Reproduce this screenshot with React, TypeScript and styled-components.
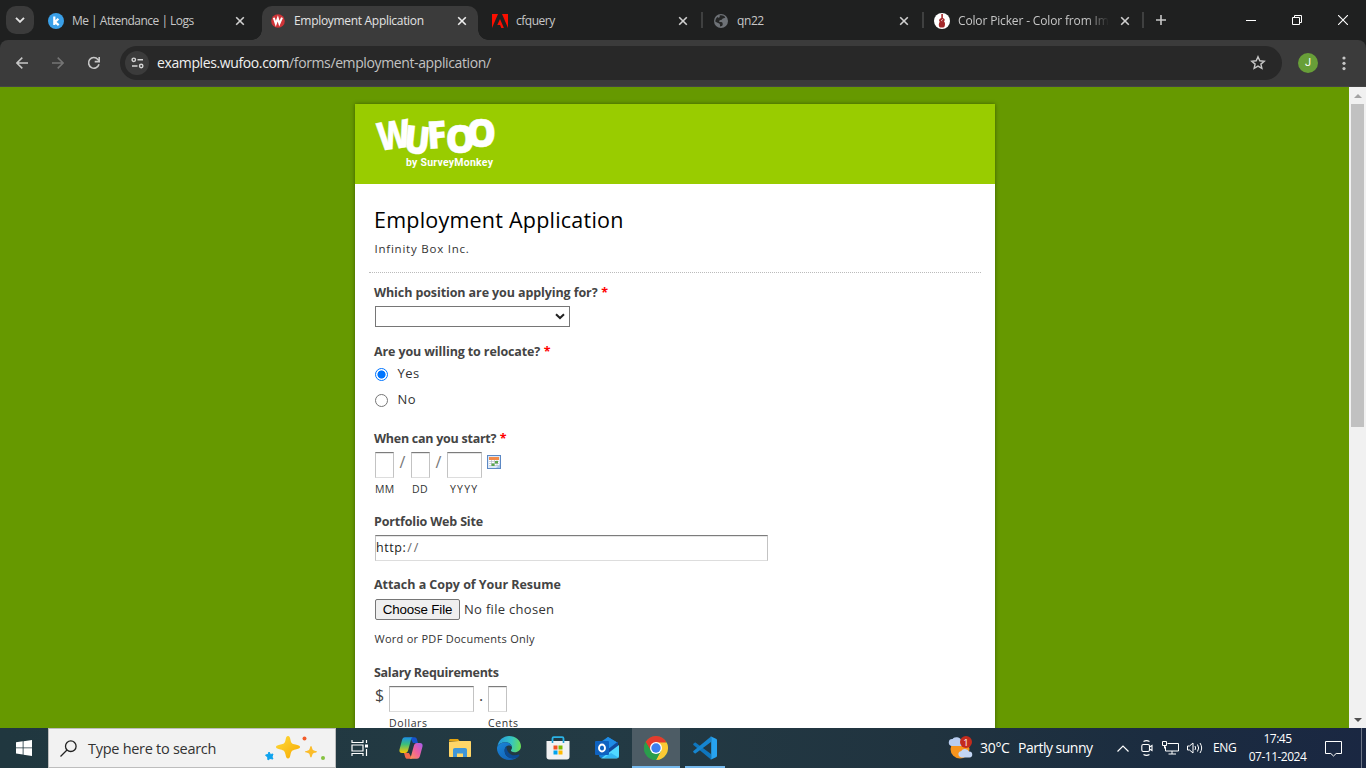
import React from "react";
import styled, { createGlobalStyle, css } from "styled-components";

const GlobalStyle = createGlobalStyle`
  * { box-sizing: border-box; }
  html, body { margin: 0; padding: 0; overflow: hidden; }
  body { background: #669900; font-family: "Open Sans", "Noto Sans", sans-serif; }
`;

const Desktop = styled.div`
  width: 1366px;
  height: 768px;
  display: flex;
  flex-direction: column;
  overflow: hidden;
`;

/* ---------- browser chrome ---------- */
const TabStrip = styled.div`
  height: 40px;
  background: #1f2020;
  display: flex;
  align-items: stretch;
  flex: none;
`;
const TabSearch = styled.div`
  width: 28px;
  height: 28px;
  margin: 6px 0 0 6px;
  border-radius: 10px;
  background: #3b3b3b;
  display: flex;
  align-items: center;
  justify-content: center;
`;
const Tab = styled.div<{ $w: number; $active?: boolean; $gap?: number; $end?: number }>`
  position: relative;
  width: ${(p) => p.$w}px;
  margin-left: ${(p) => p.$gap ?? 0}px;
  height: 34px;
  margin-top: 6px;
  padding: 0 ${(p) => p.$end ?? 10}px 5px ${(p) => (p.$active ? 8 : 10)}px;
  display: flex;
  align-items: center;
  ${(p) =>
    p.$active &&
    css`
      background: #3b3b3b;
      border-radius: 10px 10px 0 0;
      &::before, &::after {
        content: "";
        position: absolute;
        bottom: 0;
        width: 10px;
        height: 10px;
      }
      &::before { left: -10px; background: radial-gradient(circle at 0 0, transparent 9.5px, #3b3b3b 10px); }
      &::after { right: -10px; background: radial-gradient(circle at 100% 0, transparent 9.5px, #3b3b3b 10px); }
    `}
`;
const TabTitle = styled.span<{ $ls?: number; $active?: boolean; $fade?: boolean }>`
  flex: 1;
  min-width: 0;
  margin-left: 8px;
  font-size: 12px;
  line-height: 16px;
  white-space: nowrap;
  overflow: hidden;
  letter-spacing: ${(p) => p.$ls ?? 0}px;
  color: ${(p) => (p.$active ? "#e3e3e3" : "#c7c7c7")};
  ${(p) => p.$fade && css`mask-image: linear-gradient(90deg, #000 128px, transparent 151px);`}
`;
const Divider = styled.i`
  width: 2px;
  height: 16px;
  margin-top: 12px;
  background: #3f4040;
`;
const WindowButtons = styled.div`
  margin-left: auto;
  display: flex;
`;
const WinButton = styled.div`
  width: 46px;
  height: 40px;
  display: flex;
  align-items: center;
  justify-content: center;
`;
const ToolbarBack = styled.div`
  background: #1f2020;
  flex: none;
`;
const Toolbar = styled.div`
  height: 47px;
  background: #3b3b3b;
  border-radius: 8px 8px 0 0;
  border-bottom: 1px solid #454545;
  display: flex;
  align-items: center;
  padding-left: 4px;
`;
const ToolButton = styled.div`
  width: 36px;
  display: flex;
  justify-content: center;
`;
const Omnibox = styled.div`
  width: 1162px;
  height: 34px;
  margin-left: 8px;
  border-radius: 17px;
  background: #282828;
  display: flex;
  align-items: center;
  padding: 0 16px 0 5px;
`;
const SiteInfo = styled.div`
  width: 24px;
  height: 24px;
  border-radius: 50%;
  background: #3b3b3b;
  display: flex;
  align-items: center;
  justify-content: center;
`;
const Url = styled.span`
  flex: 1;
  margin-left: 8px;
  font-size: 14px;
  line-height: 20px;
  letter-spacing: -0.385px;
  color: #c3c3c3;
  b { font-weight: 400; color: #f0f0f0; }
`;
const Avatar = styled.div`
  width: 20px;
  height: 20px;
  margin-left: 16px;
  border-radius: 50%;
  background: #689f38;
  color: #fff;
  font: 11px/20px Roboto, sans-serif;
  text-align: center;
`;

/* ---------- page ---------- */
const Viewport = styled.div`
  height: 641px;
  display: flex;
  flex: none;
  overflow: hidden;
`;
const PageArea = styled.main`
  width: 1349px;
  background: #669900;
  padding-top: 17px;
  overflow: hidden;
`;
const Card = styled.div`
  width: 640px;
  height: 700px;
  margin-left: 355px;
  background: #fff;
  box-shadow: 0 0 4px rgba(0, 0, 0, 0.4);
  color: #333;
`;
const Header = styled.header`
  height: 80px;
  background: #99cc00;
  padding: 13px 0 0 18px;
`;
const FormHead = styled.div`
  margin: 0 14px 10px;
  padding: 20px 0 0 5px;
  height: 89px;
  border-bottom: 1px dotted #bbb;
`;
const Title = styled.h1`
  margin: 0;
  font-size: 21.5px;
  font-weight: 400;
  line-height: 31px;
  letter-spacing: 0.22px;
  color: #000;
`;
const Sub = styled.div`
  margin: 5px 0 0 0.5px;
  font-size: 11.5px;
  line-height: 18px;
  letter-spacing: 0.77px;
`;
const Field = styled.div<{ $h: number }>`
  height: ${(p) => p.$h}px;
  padding-left: 20px;
`;
const Label = styled.div<{ $ls?: number }>`
  height: 20px;
  margin-left: -1px;
  line-height: 20px;
  font-size: 12.5px;
  font-weight: 700;
  color: #444;
  letter-spacing: ${(p) => p.$ls ?? -0.1}px;
  white-space: nowrap;
  em { color: #f00; font-style: normal; margin-left: 0.5px; }
`;
const Select = styled.div`
  width: 195px;
  height: 21px;
  margin-top: 3px;
  border: 1px solid #767676;
  background: #fff;
  display: flex;
  justify-content: flex-end;
  align-items: center;
  padding-right: 4px;
`;
const Options = styled.div`
  margin-top: -1px;
`;
const Option = styled.div`
  display: flex;
  align-items: center;
  height: 26px;
  font-size: 13px;
  letter-spacing: 0.45px;
  span { margin-left: 9.5px; padding-bottom: 2px; }
`;
const Radio = styled.i<{ $on?: boolean }>`
  width: 13px;
  height: 13px;
  margin-top: 1px;
  border-radius: 50%;
  border: 1px solid ${(p) => (p.$on ? "#0075ff" : "#767676")};
  background: ${(p) => (p.$on ? "radial-gradient(circle, #0075ff 3.7px, #fff 4.4px)" : "#fff")};
`;
const Row = styled.div`
  display: flex;
  margin-top: 3px;
  align-items: flex-start;
`;
const Box = styled.div<{ $w: number }>`
  width: ${(p) => p.$w}px;
  height: 26px;
  border: 1px solid #ccc;
  border-color: #7c7c7c #c3c3c3 #ddd;
  box-shadow: inset 0 1px 0 #e6e6e6;
  background: #fff;
  font-size: 12.5px;
  line-height: 24px;
  letter-spacing: 0.55px;
  color: #222;
  i { font-style: normal; color: #666; letter-spacing: 2px; margin-left: 1px; }
`;
const Sep = styled.span<{ $w: number; $light?: boolean; $align?: string }>`
  width: ${(p) => p.$w}px;
  text-align: ${(p) => p.$align ?? "center"};
  font-size: 16px;
  line-height: ${(p) => (p.$light ? 20 : 18)}px;
  color: ${(p) => (p.$light ? "#777" : "#444")};
`;
const CalendarSlot = styled.div`
  margin: 3px 0 0 5px;
  height: 15px;
  svg { display: block; }
`;
const Captions = styled.div`
  display: flex;
  height: 22px;
  font-size: 10.5px;
  line-height: 22px;
`;
const Caption = styled.span<{ $w: number; $ls?: number; $indent?: number }>`
  width: ${(p) => p.$w}px;
  padding-left: ${(p) => p.$indent ?? 0}px;
  letter-spacing: ${(p) => p.$ls ?? 0.3}px;
`;
const FileRow = styled.div`
  display: flex;
  align-items: center;
  height: 21px;
  margin-top: 4px;
  font-size: 13px;
  line-height: 19px;
  letter-spacing: 0.3px;
  span { padding-bottom: 1px; }
`;
const FileButton = styled.div`
  width: 85px;
  height: 21px;
  margin-right: 4px;
  border: 1px solid #767676;
  border-radius: 2px;
  background: #efefef;
  color: #000;
  text-align: center;
  font: 13.33px/19px "Liberation Sans", Arial, sans-serif;
  letter-spacing: -0.15px;
`;
const Hint = styled.div`
  margin: 9px 0 0 -0.5px;
  font-size: 11px;
  line-height: 20px;
  letter-spacing: 0.27px;
`;

const Scrollbar = styled.div`
  width: 17px;
  background: #f1f1f1;
  display: flex;
  flex-direction: column;
  align-items: center;
  justify-content: space-between;
`;
const Arrow = styled.div`
  height: 17px;
  display: flex;
  align-items: center;
`;
const Thumb = styled.div`
  width: 13px;
  height: 323px;
  margin-bottom: auto;
  background: #c1c1c1;
`;

/* ---------- taskbar ---------- */
const Taskbar = styled.footer`
  height: 40px;
  flex: none;
  display: flex;
  align-items: stretch;
  background: linear-gradient(90deg, #20373f 0, #233a44 45%, #20333f 68%, #1b2c40 85%, #1a2742 100%);
  color: #fff;
`;
const Slot = styled.div<{ $w: number; $bg?: string; $ml?: number }>`
  width: ${(p) => p.$w}px;
  margin-left: ${(p) => p.$ml ?? 0}px;
  background: ${(p) => p.$bg ?? "none"};
  display: flex;
  align-items: center;
  justify-content: center;
  flex: none;
`;
const AppSlot = styled(Slot)<{ $line?: number }>`
  ${(p) =>
    p.$line &&
    css`
      background-image: linear-gradient(#76b9ed, #76b9ed);
      background-size: ${p.$line}px 2px;
      background-position: 50% 100%;
      background-repeat: no-repeat;
    `}
`;
const SearchBox = styled.div`
  width: 288px;
  border: 1px solid #bdbdbd;
  background: #f2f2f2;
  color: #333;
  display: flex;
  align-items: center;
  padding-left: 11px;
  span { margin-left: 11px; font-size: 14.5px; letter-spacing: -0.28px; width: 176px; white-space: nowrap; }
`;
const TrayText = styled.span<{ $w: number; $size?: number; $ls?: number; $ml?: number }>`
  width: ${(p) => p.$w}px;
  margin-left: ${(p) => p.$ml ?? 0}px;
  font-size: ${(p) => p.$size ?? 14}px;
  letter-spacing: ${(p) => p.$ls ?? -0.3}px;
  line-height: 40px;
  white-space: nowrap;
`;
const Tray = styled.div`
  margin-left: auto;
  width: 418px;
  display: flex;
  align-items: stretch;
`;
const Clock = styled.div`
  width: 80px;
  text-align: center;
  font-size: 12px;
  line-height: 18px;
  padding: 2px 0 0 1px;
  letter-spacing: -0.5px;
`;
const Peek = styled.i`
  margin-left: auto;
  width: 5px;
  border-left: 1px solid #6d7687;
`;

/* ---------- icons ---------- */
const CloseX = ({ c = "#d0d0d0" }: { c?: string }) => (
  <svg width="10" height="10" viewBox="0 0 10 10" stroke={c} strokeWidth="1.6">
    <path d="M1.2 1.2l7.6 7.6M8.8 1.2L1.2 8.8" />
  </svg>
);
const KIcon = () => (
  <svg width="16" height="16" viewBox="0 0 16 16">
    <circle cx="8" cy="8" r="8" fill="#3aa0e8" />
    <path d="M6.3 3.5v8.6M10.4 5.8L7 9l3.7 3.2" stroke="#fff" strokeWidth="2.2" fill="none" />
  </svg>
);
const WIcon = () => (
  <svg width="16" height="16" viewBox="0 0 16 16">
    <circle cx="8" cy="8" r="6.8" fill="#cf3438" />
    <path d="M3.8 4.8l2 6 2-5.4 1.6 5.2 2.6-6" stroke="#fff" strokeWidth="2" fill="none" />
  </svg>
);
const AdobeIcon = () => (
  <svg width="16" height="16" viewBox="0 0 16 16" fill="#fa0f00">
    <path d="M0 1h6L0 15zM10 1h6v14zM8 6l3.9 9H9.3l-1.2-3H5.3z" />
  </svg>
);
const GlobeIcon = () => (
  <svg width="16" height="16" viewBox="0 0 16 16">
    <circle cx="8" cy="8" r="7" fill="#6e7277" />
    <path d="M6.7 2.4c2.5-.6 4.6.4 5.6 2-.8 1.2-2.6.4-3 1.6-.5 1.4-2.3.5-3 1.8-.5 1 .3 1.4 1.4 1.2 1.9-.3 2 1.2 2 2.4-.1 1.5-1.4 1.8-2.7 2.1 0-1.5.2-2.4-.8-3C4.8 9.7 3 9.6 2.3 8.6c.2-2 1-3.6 2.3-4.5.5.9 1.7.7 2.1-.1.3-.6-.3-1 0-1.6z" fill="#252626" />
  </svg>
);
const BottleIcon = () => (
  <svg width="16" height="16" viewBox="0 0 16 16">
    <circle cx="8" cy="8" r="8" fill="#fff" />
    <path d="M7.3 1h1.6v4c2.3.7 2.200 2.400 1.100 3.200 1.400 1.300 1.300 3.800.3 5.800-1.200.8-3.900.8-5 0-.8-1.900-.6-3.800.4-5.200C4.400 7.600 5 6 7.300 5z" fill="#a3292b" />
    <path d="M8.700 6.500c-1.400.3-1.300 1.400-.6 1.700" stroke="#fff" fill="none" strokeWidth=".8" />
  </svg>
);
const LETTERS = [
  { ch: "W", x: 6, y: 34, r: -8, sx: 0.83, s: 39 },
  { ch: "U", x: 30, y: 35.2, r: 6, sx: 0.88, s: 38.5 },
  { ch: "F", x: 55, y: 32, r: -4, sx: 0.95, s: 38 },
  { ch: "O", x: 72.6, y: 35.6, r: 0, sx: 0.98, s: 38 },
  { ch: "O", x: 93.6, y: 29.6, r: 0, sx: 0.98, s: 38 },
];
const LogoSvg = styled.svg`
  display: block;
  overflow: visible;
`;
const WufooLogo = () => (
  <LogoSvg width="130" height="60" viewBox="0 0 130 60" fill="#fff" fontFamily="Open Sans" fontWeight="800">
    {LETTERS.map((l, i) => (
      <text key={i} fontSize={l.s} stroke="#fff" strokeWidth="0.4" transform={`translate(${l.x} ${l.y}) rotate(${l.r}) scale(${l.sx} 1)`}>
        {l.ch}
      </text>
    ))}
    <text x="33" y="49" fontFamily="Roboto" fontWeight="700" fontSize="10.5" textLength="87">by SurveyMonkey</text>
  </LogoSvg>
);
const Calendar = () => (
  <svg width="14" height="14" viewBox="0 0 14 14">
    <rect x=".5" y=".5" width="13" height="13" fill="#dce9f8" stroke="#5c88c4" />
    <path d="M2 2h10v3H2z" fill="#f28a4a" />
    <path d="M2 5h10v6H2z" fill="#fff" />
    <path d="M2 6.5h10M2 8.5h10M2 10.5h10M4.5 5v6M7.5 5v6M10 5v6" stroke="#a9b4c4" strokeWidth=".6" />
    <path d="M8 6h3v2.5H8zM4.5 8.5h3V11h-3z" fill="#5aa84c" />
    <path d="M9 13l4-4v4z" fill="#a8c6ea" />
  </svg>
);
const Sparkles = () => (
  <svg width="62" height="28" viewBox="0 0 62 28">
    <defs>
      <linearGradient id="gold" x1="0" y1="0" x2="1" y2="1">
        <stop offset="0" stopColor="#ffdc3c" />
        <stop offset="1" stopColor="#f6a800" />
      </linearGradient>
    </defs>
    <path d="M24 2c1.5 0 2 1.5 2.5 4 .7 3.5 1.5 3.8 5 4.6 2.5.6 4.5 1 4.5 2.4s-2 1.8-4.5 2.4c-3.5.8-4.3 1.6-5 5.1-.5 2.5-1 4-2.5 4s-2-1.5-2.5-4c-.7-3.5-1.5-4.3-5-5.1-2.5-.6-4.500-1-4.500-2.400s2-1.800 4.500-2.400c3.500-.8 4.300-1.100 5-4.600C22 3.500 22.500 2 24 2z" fill="url(#gold)" />
    <path d="M47 12c1 0 1 3 2 4s4 .8 4 1.8-3 .8-4 1.8-1 4-2 4-1-3-2-4-4-.8-4-1.800 3-.8 4-1.800 1-4 2-4z" fill="#fbbc2a" />
    <path d="M5 18l1.5 2.5L9 20l-1 3 1 2-3-.5-2 1.500-.4-2.800L1.500 21l2.500-.5z" fill="#0fa3ee" stroke="#0fa3ee" strokeLinejoin="round" />
    <circle cx="40.5" cy="4.500" r="2" fill="#f25c2a" />
    <circle cx="59" cy="24" r="2" fill="#86c240" />
  </svg>
);
const Copilot = () => (
  <svg width="24" height="24" viewBox="0 0 24 24">
    <defs>
      <linearGradient id="cpa" x1="0" y1="0" x2="0" y2="1">
        <stop offset="0" stopColor="#1b8fe8" />
        <stop offset=".45" stopColor="#3bbf7a" />
        <stop offset="1" stopColor="#ffc800" />
      </linearGradient>
      <linearGradient id="cpb" x1="1" y1="0" x2="0" y2="1">
        <stop offset="0" stopColor="#a45cf0" />
        <stop offset=".5" stopColor="#f0609c" />
        <stop offset="1" stopColor="#ff9a4c" />
      </linearGradient>
    </defs>
    <path d="M11 1.200h4.500c1.400 0 2 .8 2.500 2.300l1 3.500H14z" fill="#1552cc" />
    <path d="M13 22.800H8.500c-1.400 0-2-.8-2.500-2.300L5 17h5z" fill="#f2694a" />
    <path d="M6 1.200h8c-1 0-1.500.8-1.800 1.800L9.200 14c-.5 1.800-1.400 3-3.200 3H3c-2 0-3-1.500-2.500-3.500L3 4.200c.5-2 1.300-3 3-3z" fill="url(#cpa)" />
    <path d="M18 22.800h-8c1 0 1.500-.8 1.800-1.800L14.800 10c.5-1.800 1.400-3 3.200-3h3c2 0 3 1.500 2.500 3.500L21 19.800c-.5 2-1.300 3-3 3z" fill="url(#cpb)" />
  </svg>
);
const Folder = () => (
  <svg width="22" height="20" viewBox="0 0 22 20">
    <path d="M1 1h8l1.500 2H1z" fill="#d99a0d" />
    <path d="M0 3c0-1 .4-2 1-2h7.500l2 2.500H0z" fill="#e5a50f" />
    <path d="M0 4l10-1h11c.7 0 1 .3 1 1v14c0 .6-.4 1-1 1H1c-.6 0-1-.4-1-1z" fill="#ffd667" />
    <path d="M4 19v-7c0-1.200.6-2 2-2h10c1.400 0 2 .8 2 2v7h-4v-3.500H8V19z" fill="#3f96d8" />
  </svg>
);
const Edge = () => (
  <svg width="24" height="24" viewBox="0 0 24 24">
    <defs>
      <linearGradient id="eda" x1="0" y1=".3" x2="1" y2=".4">
        <stop offset="0" stopColor="#2597e0" />
        <stop offset=".6" stopColor="#36c6c0" />
        <stop offset="1" stopColor="#68de5a" />
      </linearGradient>
      <linearGradient id="edb" x1="0" y1="0" x2="1" y2="1">
        <stop offset="0" stopColor="#1a86d8" />
        <stop offset="1" stopColor="#1059ae" />
      </linearGradient>
    </defs>
    <path d="M.5 10C1.500 4.200 6.300 0 12 0c6.800 0 12 4.700 12 10.200 0 3.600-2.800 6-6.300 6-2.800 0-3.800-1-3.800-1.700 0-.6 1.100-1 1.100-3C15 9 12.500 6.300 8.500 6.300c-4 0-6.600 1.800-8 3.700z" fill="url(#eda)" />
    <path d="M.3 10.500C1.800 8 5 6.300 8.500 6.300c3.700 0 6.100 2.300 6.400 4.700-.8-1.200-1.800-1.600-3-1.600-2.500 0-4.300 2.200-4.300 5 0 4.700 3.700 7.800 8 7.800 2.700 0 5-1 6.800-3-2 3-5.700 4.800-10.200 4.800C5.500 24 0 18.600 0 12.500c0-.7.100-1.400.3-2z" fill="url(#edb)" />
    <path d="M9.300 10.300c-2.800 2.500-2.300 9.200 3.700 11.700 3.800 1.300 7.700-.3 9.300-2.500.4-.7 0-1.300-.8-.9-5.400 2.200-11.500-.2-12.200-8.300z" fill="#0c4a92" />
  </svg>
);
const Store = () => (
  <svg width="24" height="24" viewBox="0 0 24 24">
    <path d="M6.500 6V2.500c0-.8.500-1.300 1.300-1.300h8.400c.8 0 1.300.5 1.300 1.300V6" fill="none" stroke="#2bb3e6" strokeWidth="1.800" />
    <path d="M.5 5h23v16c0 1.600-1 2.500-2.500 2.500H3c-1.500 0-2.500-.9-2.500-2.500z" fill="#f1f1f2" />
    <path d="M7.500 9.500h4v4h-4z" fill="#f25022" />
    <path d="M12.500 9.500h4v4h-4z" fill="#7fba00" />
    <path d="M7.500 14.500h4v4h-4z" fill="#00a4ef" />
    <path d="M12.500 14.500h4v4h-4z" fill="#ffb900" />
    <path d="M6.500 5v2M17.500 5v2" stroke="#1f9fd6" strokeWidth="1.600" />
  </svg>
);
const Outlook = () => (
  <svg width="24" height="24" viewBox="0 0 24 24">
    <path d="M4 7l9-6 10 6v12c0 2-1 3-3 3H7c-2 0-3-1-3-3z" fill="#1581da" />
    <path d="M13 1l10 6-9 7-8-7z" fill="#1f8ce6" />
    <path d="M23 5.500v6L14 17l-2-3z" fill="#114a9c" />
    <path d="M24 9v11c0 1.500-1 2.500-2.500 2.500H6z" fill="#50d9ff" />
    <path d="M24 22H9l7-5z" fill="#34b7f1" />
    <rect x="0" y="5" width="14" height="14" rx="1" fill="#0f62c0" />
    <ellipse cx="7" cy="12" rx="3" ry="3.500" fill="none" stroke="#fff" strokeWidth="1.900" />
  </svg>
);
const Chrome = () => (
  <svg width="24" height="24" viewBox="0 0 24 24">
    <circle cx="12" cy="12" r="12" fill="#2a9d4c" />
    <path d="M12 12L1.600 6A12 12 0 0 1 22.400 6z" fill="#e33b2e" />
    <path d="M12 6.500h10.700A12 12 0 0 1 12 24l4.800-9.200z" fill="#fcc934" />
    <path d="M1.600 6L7 15l5-3V6.500z" fill="#e33b2e" />
    <path d="M1.600 6A12 12 0 0 0 12 24l5-9H7z" fill="#2a9d4c" />
    <circle cx="12" cy="12" r="6" fill="#fff" />
    <circle cx="12" cy="12" r="4.700" fill="#3b7ff0" />
  </svg>
);
const VsCode = () => (
  <svg width="24" height="24" viewBox="0 0 24 24">
    <path d="M18 18v5.500L.4 8.900c-.4-.4-.4-.8 0-1.100L1.600 6.700c.4-.3.800-.3 1.200 0z" fill="#0f76bd" />
    <path d="M18 6V.5L.4 15.100c-.4.4-.4.8 0 1.100l1.200 1.100c.4.3.8.3 1.200 0z" fill="#1685cf" />
    <path d="M17.500.3L23 2.800c.6.300 1 .8 1 1.500v15.400c0 .7-.4 1.200-1 1.500l-5.500 2.500c.5-.4.700-.8.700-1.500V1.800c0-.7-.2-1.100-.7-1.500z" fill="#27a3f0" />
  </svg>
);
const Weather = () => (
  <svg width="26" height="24" viewBox="0 0 26 24">
    <circle cx="12" cy="13" r="9.500" fill="#f7941d" />
    <path d="M4 10a3.500 3.500 0 0 1 .6-7A5 5 0 0 1 13 4a3 3 0 0 1 1 6z" fill="#b9cdf0" />
    <path d="M13 21.500a3.200 3.200 0 0 1 0-6.300 4.500 4.500 0 0 1 8 .3 3 3 0 0 1 .5 6z" fill="#c4d6f4" />
    <circle cx="18" cy="6" r="6" fill="#c42b1c" />
    <text x="18" y="9.500" fontSize="9.500" textAnchor="middle" fill="#fff">1</text>
  </svg>
);

const TaskButtons = () => (
  <>
    <Slot $w={48}>
      <svg width="18" height="18" viewBox="0 0 18 18" fill="none" stroke="#fff" strokeWidth="1.200">
        <path d="M1 1v2.500h11V1M1 17v-2.500h11V17M1 6h11v6H1zM15.500 1v3M15.500 10v7" />
        <path d="M14 5.500h3v3h-3z" fill="#fff" stroke="none" />
      </svg>
    </Slot>
    <Slot $w={48} $ml={3}><Copilot /></Slot>
    <Slot $w={48} $ml={1}><Folder /></Slot>
    <Slot $w={48} $ml={1}><Edge /></Slot>
    <Slot $w={48} $ml={1}><Store /></Slot>
    <Slot $w={48} $ml={1}><Outlook /></Slot>
    <AppSlot $w={48} $ml={1} $bg="#4d5c65" $line={48}><Chrome /></AppSlot>
    <AppSlot $w={48} $ml={1} $line={40}><VsCode /></AppSlot>
  </>
);

export default function App() {
  return (
    <Desktop>
      <GlobalStyle />
      <TabStrip>
        <TabSearch>
          <svg width="10" height="6" viewBox="0 0 10 6" fill="none" stroke="#e3e3e3" strokeWidth="1.900"><path d="M1 .8l4 4 4-4" /></svg>
        </TabSearch>
        <Tab $w={216} $gap={4} $end={9}><KIcon /><TabTitle $ls={-0.51}>Me | Attendance | Logs</TabTitle><CloseX /></Tab>
        <Tab $w={216} $gap={8} $active $end={11}><WIcon /><TabTitle $active $ls={-0.31}>Employment Application</TabTitle><CloseX c="#eee" /></Tab>
        <Tab $w={216} $gap={4}><AdobeIcon /><TabTitle $ls={-0.5}>cfquery</TabTitle><CloseX /></Tab>
        <Divider style={{ marginLeft: 3 }} />
        <Tab $w={216}><GlobeIcon /><TabTitle $ls={-0.4}>qn22</TabTitle><CloseX /></Tab>
        <Divider style={{ marginLeft: 3 }} />
        <Tab $w={216}><BottleIcon /><TabTitle $fade $ls={-0.15}>Color Picker - Color from Im</TabTitle><CloseX /></Tab>
        <Divider style={{ marginLeft: 2 }} />
        <Slot $w={34}>
          <svg width="10" height="10" viewBox="0 0 10 10" stroke="#c7c7c7" strokeWidth="1.600"><path d="M5 0v10M0 5h10" /></svg>
        </Slot>
        <WindowButtons>
          <WinButton><svg width="10" height="10" stroke="#fff"><path d="M0 5.500h10" /></svg></WinButton>
          <WinButton><svg width="10" height="10" fill="none" stroke="#fff"><path d="M.5 2.500h7v7h-7zM2.500 2V.5h7v7H8" /></svg></WinButton>
          <WinButton><svg width="10" height="10" stroke="#fff" strokeWidth="1.100"><path d="M0 0l10 10M10 0L0 10" /></svg></WinButton>
        </WindowButtons>
      </TabStrip>
      <ToolbarBack>
        <Toolbar>
          <ToolButton><svg width="12" height="12" viewBox="0 0 12 12" fill="none" stroke="#c7c7c7" strokeWidth="1.500"><path d="M12 6H1M6.300.6L.9 6l5.400 5.400" /></svg></ToolButton>
          <ToolButton><svg width="12" height="12" viewBox="0 0 12 12" fill="none" stroke="#757575" strokeWidth="1.500"><path d="M0 6h11M5.700.6L11.100 6l-5.400 5.400" /></svg></ToolButton>
          <ToolButton><svg width="14" height="14" viewBox="0 0 14 14" fill="none" stroke="#c7c7c7" strokeWidth="1.600"><path d="M12 8.300A5.300 5.300 0 1 1 10.900 3.400L12 4.600" /><path d="M12.200 1v4.600H7.700" /></svg></ToolButton>
          <Omnibox>
            <SiteInfo>
              <svg width="13" height="12" viewBox="0 0 13 12" fill="none" stroke="#d5d5d5" strokeWidth="1.400"><circle cx="2.800" cy="2.800" r="1.700" /><path d="M6.500 2.800h5.500M1 9h5.500" /><circle cx="10.200" cy="9" r="1.700" /></svg>
            </SiteInfo>
            <Url><b>examples.wufoo.com</b>/forms/employment-application/</Url>
            <svg width="16" height="16" viewBox="0 0 16 16" fill="none" stroke="#c7c7c7" strokeWidth="1.400"><path d="M8 1.800l1.800 4 4.400.4-3.300 2.900 1 4.300L8 11.100l-3.900 2.300 1-4.300L1.800 6.200l4.400-.4z" /></svg>
          </Omnibox>
          <Avatar>J</Avatar>
          <Slot $w={16} $ml={18}>
            <svg width="4" height="16" fill="#c7c7c7"><circle cx="2" cy="3" r="1.600" /><circle cx="2" cy="8.300" r="1.600" /><circle cx="2" cy="13.600" r="1.600" /></svg>
          </Slot>
        </Toolbar>
      </ToolbarBack>

      <Viewport>
        <PageArea>
          <Card>
            <Header><WufooLogo /></Header>
            <FormHead>
              <Title>Employment Application</Title>
              <Sub>Infinity Box Inc.</Sub>
            </FormHead>
            <Field $h={59}>
              <Label $ls={-0.1}>Which position are you applying for? <em>*</em></Label>
              <Select>
                <svg width="10" height="7" viewBox="0 0 10 7" fill="none" stroke="#222" strokeWidth="2"><path d="M1 1.200l4 3.800 4-3.800" /></svg>
              </Select>
            </Field>
            <Field $h={87}>
              <Label $ls={-0.12}>Are you willing to relocate? <em>*</em></Label>
              <Options>
                <Option><Radio $on /><span>Yes</span></Option>
                <Option><Radio /><span>No</span></Option>
              </Options>
            </Field>
            <Field $h={83}>
              <Label $ls={-0.26}>When can you start? <em>*</em></Label>
              <Row>
                <Box $w={19} /><Sep $w={17} $light>/</Sep><Box $w={19} /><Sep $w={17} $light>/</Sep><Box $w={35} />
                <CalendarSlot><Calendar /></CalendarSlot>
              </Row>
              <Captions><Caption $w={37}>MM</Caption><Caption $w={38}>DD</Caption><Caption $w={40} $ls={1.2}>YYYY</Caption></Captions>
            </Field>
            <Field $h={63}>
              <Label $ls={-0.17}>Portfolio Web Site</Label>
              <Row><Box $w={393}>http:<i>//</i></Box></Row>
            </Field>
            <Field $h={88}>
              <Label $ls={-0.04}>Attach a Copy of Your Resume</Label>
              <FileRow><FileButton>Choose File</FileButton><span>No file chosen</span></FileRow>
              <Hint>Word or PDF Documents Only</Hint>
            </Field>
            <Field $h={82}>
              <Label $ls={-0.28}>Salary Requirements</Label>
              <Row><Sep $w={14} $align="left">$</Sep><Box $w={85} /><Sep $w={14}>.</Sep><Box $w={19} /></Row>
              <Captions><Caption $w={113} $indent={14} $ls={0.6}>Dollars</Caption><Caption $w={50} $ls={0.6}>Cents</Caption></Captions>
            </Field>
          </Card>
        </PageArea>
        <Scrollbar>
          <Arrow><svg width="8" height="4" fill="#a3a3a3"><path d="M0 4l4-4 4 4z" /></svg></Arrow>
          <Thumb />
          <Arrow><svg width="8" height="4" fill="#505050"><path d="M0 0l4 4 4-4z" /></svg></Arrow>
        </Scrollbar>
      </Viewport>

      <Taskbar>
        <Slot $w={48}>
          <svg width="16" height="16" viewBox="0 0 16 16" fill="#fff"><path d="M0 2.300L6.700 1.300v6.200H0zM7.500 1.200L16 0v7.500H7.500zM0 8.300h6.700v6.200L0 13.600zM7.500 8.300H16V16l-8.500-1.300z" /></svg>
        </Slot>
        <SearchBox>
          <svg width="17" height="17" viewBox="0 0 17 17" fill="none" stroke="#222" strokeWidth="1.300"><circle cx="10.800" cy="6.200" r="5.300" /><path d="M7 10L.5 16.500" /></svg>
          <span>Type here to search</span>
          <Sparkles />
        </SearchBox>
        <TaskButtons />
        <Tray>
          <Slot $w={26}><Weather /></Slot>
          <TrayText $w={38} $ml={6}>30°C</TrayText>
          <TrayText $w={90} $ls={-0.5}>Partly sunny</TrayText>
          <Slot $w={30}><svg width="12" height="7" fill="none" stroke="#fff" strokeWidth="1.200"><path d="M.5 6.500L6 1l5.500 5.500" /></svg></Slot>
          <Slot $w={18}>
            <svg width="12" height="16" viewBox="0 0 12 16" fill="none" stroke="#fff" strokeWidth="1.100"><rect x=".8" y="4.500" width="7.700" height="7" rx="1.500" /><path d="M8.500 7l2.500-1.500v5L8.500 9M2.500 1.500Q5.500-.2 8.500 1.500M2.500 14.500q3 1.700 6 0" /></svg>
          </Slot>
          <Slot $w={29}>
            <svg width="17" height="14" viewBox="0 0 17 14" fill="none" stroke="#fff"><path d="M5.500 2.500h11v7.500H3.500V5.500M10 10v3M6.500 13h7.500M.5.500h4v4h-4zM2.500 4.500v3" /></svg>
          </Slot>
          <Slot $w={21}>
            <svg width="17" height="12" viewBox="0 0 17 12" fill="none" stroke="#fff"><path d="M.5 4h2L6 1v10L2.500 8h-2zM8 4q1.300 2 0 4M10.500 2.500q2.300 3.500 0 7M13 1q3.300 5 0 10" /></svg>
          </Slot>
          <TrayText $w={24} $size={12} $ml={7}>ENG</TrayText>
          <Clock>17:45<br />07-11-2024</Clock>
          <Slot $w={30} $ml={1}>
            <svg width="17" height="17" viewBox="0 0 17 17" fill="none" stroke="#fff"><path d="M.5 1.500h16v12h-5.300L8.500 16l-2.700-2.500H.5z" /></svg>
          </Slot>
          <Peek />
        </Tray>
      </Taskbar>
    </Desktop>
  );
}
